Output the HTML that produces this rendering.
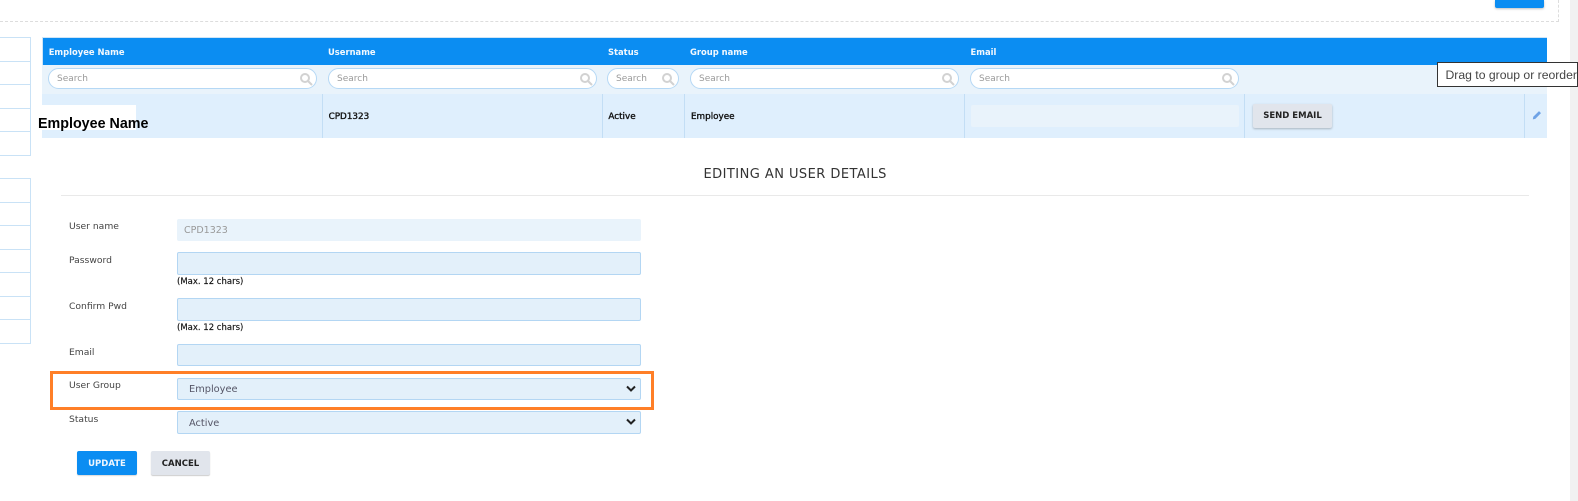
<!DOCTYPE html>
<html><head><meta charset="utf-8"><style>
html,body{margin:0;padding:0;width:1578px;height:501px;overflow:hidden;background:#fff;font-family:"DejaVu Sans","Liberation Sans",sans-serif;}
div,span{position:absolute;box-sizing:border-box;white-space:nowrap;}
.t{line-height:14px;height:14px;}
.h{color:#f2f8fe;font-size:8.4px;font-weight:bold;top:45px;}
.s{top:68px;height:21px;background:#fff;border:1px solid #b5d8f5;border-radius:11px;}
.s span{left:8px;top:3px;font-size:9px;line-height:14px;color:#9a9a9a;}
.s svg{position:absolute;right:3px;top:3px;}
.sep{top:94px;height:44px;width:1px;background:#c3def5;}
.c{top:110px;font-size:8.8px;color:#111;line-height:14px;-webkit-text-stroke:.35px #111;}
.st{left:0;width:31px;height:1px;background:#c9e2f6;}
.lb{left:69px;font-size:9.2px;color:#444;line-height:14px;}
.in{left:177px;width:464px;background:#e3f0fa;border:1px solid #b3d6f3;border-radius:2px;}
.hint{left:177px;font-size:8.5px;color:#111;line-height:12px;-webkit-text-stroke:.15px #111;}
.sel{font-size:9.8px;color:#556;padding-left:11px;}
.sel svg{position:absolute;right:3px;top:6px;}
</style></head><body>
<div style="left:0;top:21px;width:1559px;border-top:1px dashed #ddd;"></div>
<div style="left:1558px;top:0;height:22px;border-left:1px dashed #ddd;"></div>
<div style="left:1495px;top:0;width:49px;height:8px;background:#0b8df2;border-radius:0 0 2px 2px;box-shadow:0 1px 2px rgba(0,0,0,.25);"></div>
<div style="left:1570px;top:0;width:8px;height:501px;background:#f1f1f1;"></div>

<div style="left:30px;top:37px;width:1px;height:119px;background:#c9e2f6;"></div>
<div class="st" style="top:37px"></div><div class="st" style="top:61px"></div><div class="st" style="top:84px"></div><div class="st" style="top:108px"></div><div class="st" style="top:131px"></div><div class="st" style="top:155px"></div>
<div style="left:30px;top:178px;width:1px;height:166px;background:#c9e2f6;"></div>
<div class="st" style="top:178px"></div><div class="st" style="top:202px"></div><div class="st" style="top:225px"></div><div class="st" style="top:249px"></div><div class="st" style="top:272px"></div><div class="st" style="top:296px"></div><div class="st" style="top:319px"></div><div class="st" style="top:343px"></div>

<div style="left:42px;top:37px;width:1505px;height:28px;background:#0b8df2;border-top:1px solid #cfe5f7;border-left:1px solid #cfe5f7;"></div>
<div style="left:42px;top:65px;width:1505px;height:29px;background:#e9f3fb;"></div>
<div style="left:42px;top:94px;width:1505px;height:44px;background:#dfeffd;"></div>

<span class="h t" style="left:48.7px">Employee Name</span>
<span class="h t" style="left:328px">Username</span>
<span class="h t" style="left:608px">Status</span>
<span class="h t" style="left:690px">Group name</span>
<span class="h t" style="left:970.5px">Email</span>

<div class="s" style="left:48px;width:269px"><span>Search</span><svg width="14" height="14" viewBox="0 0 14 14" fill="none" stroke="#d2d2d2" stroke-width="2"><circle cx="6" cy="6" r="4"/><path d="M9 9l4 4"/></svg></div>
<div class="s" style="left:328px;width:269px"><span>Search</span><svg width="14" height="14" viewBox="0 0 14 14" fill="none" stroke="#d2d2d2" stroke-width="2"><circle cx="6" cy="6" r="4"/><path d="M9 9l4 4"/></svg></div>
<div class="s" style="left:607px;width:72px"><span>Search</span><svg width="14" height="14" viewBox="0 0 14 14" fill="none" stroke="#d2d2d2" stroke-width="2"><circle cx="6" cy="6" r="4"/><path d="M9 9l4 4"/></svg></div>
<div class="s" style="left:690px;width:269px"><span>Search</span><svg width="14" height="14" viewBox="0 0 14 14" fill="none" stroke="#d2d2d2" stroke-width="2"><circle cx="6" cy="6" r="4"/><path d="M9 9l4 4"/></svg></div>
<div class="s" style="left:970px;width:269px"><span>Search</span><svg width="14" height="14" viewBox="0 0 14 14" fill="none" stroke="#d2d2d2" stroke-width="2"><circle cx="6" cy="6" r="4"/><path d="M9 9l4 4"/></svg></div>

<div class="sep" style="left:322px"></div><div class="sep" style="left:602px"></div><div class="sep" style="left:684px"></div><div class="sep" style="left:964px"></div><div class="sep" style="left:1244px"></div><div class="sep" style="left:1524px"></div>

<div style="left:42px;top:105px;width:94px;height:25px;background:#fff;"></div>
<span style="left:38px;top:116px;font:bold 14.3px/16px 'Liberation Sans',sans-serif;color:#000;">Employee Name</span>
<span class="c" style="left:328.6px">CPD1323</span>
<span class="c" style="left:608.4px">Active</span>
<span class="c" style="left:691px">Employee</span>
<div style="left:971px;top:105px;width:268px;height:22px;background:#e9f3fb;border-radius:2px;"></div>
<div style="left:1253px;top:104px;width:79px;height:24px;background:#e1e5ec;border-radius:2px;box-shadow:0 1px 2px rgba(0,0,0,.25);font-size:8.5px;font-weight:bold;color:#222;text-align:center;line-height:25px;">SEND EMAIL</div>
<svg style="position:absolute;left:1532px;top:110px" width="10" height="10" viewBox="0 0 10 10"><path d="M.8 9.4l.5-2.6L7 1.1 9 3.1 3.3 8.9z" fill="#6fa3e6"/></svg>

<div style="left:1437px;top:62px;width:141px;height:25px;background:#fff;border:1px solid #333;"></div>
<span style="left:1445.5px;top:67px;font:12.2px/16px 'Liberation Sans',sans-serif;color:#444;">Drag to group or reorder</span>

<span style="left:703.5px;top:167px;font-size:13px;letter-spacing:.45px;line-height:16px;color:#333;">EDITING AN USER DETAILS</span>
<div style="left:61px;top:195px;width:1468px;height:1px;background:#e9e9e9;"></div>

<span class="lb" style="top:220px">User name</span>
<div class="in" style="top:219px;height:22px;background:#e9f3fb;border:none;color:#999;font-size:9.5px;line-height:23px;padding-left:7px;">CPD1323</div>
<span class="lb" style="top:254px">Password</span>
<div class="in" style="top:252px;height:23px"></div>
<span class="hint" style="top:276px">(Max. 12 chars)</span>
<span class="lb" style="top:300px">Confirm Pwd</span>
<div class="in" style="top:298px;height:23px"></div>
<span class="hint" style="top:322px">(Max. 12 chars)</span>
<span class="lb" style="top:346px">Email</span>
<div class="in" style="top:344px;height:22px"></div>
<span class="lb" style="top:379px">User Group</span>
<div class="in sel" style="top:378px;height:22px;line-height:21px">Employee<svg width="12" height="8" viewBox="0 0 12 8" fill="none" stroke="#222" stroke-width="2"><path d="M2 1.5l4 4 4-4"/></svg></div>
<span class="lb" style="top:413px">Status</span>
<div class="in sel" style="top:411px;height:23px;line-height:23px">Active<svg width="12" height="8" viewBox="0 0 12 8" fill="none" stroke="#222" stroke-width="2"><path d="M2 1.5l4 4 4-4"/></svg></div>
<div style="left:50px;top:371px;width:604px;height:39px;border:3px solid #ff7f27;"></div>
<div style="left:77px;top:451px;width:60px;height:24px;background:#0b8df2;border-radius:2px;color:#eef6fe;font-size:8.5px;font-weight:bold;text-align:center;line-height:26px;box-shadow:0 1px 1px rgba(0,0,0,.15);">UPDATE</div>
<div style="left:151px;top:451px;width:59px;height:24px;background:#e1e5ec;border-radius:2px;color:#222;font-size:8.5px;font-weight:bold;text-align:center;line-height:26px;box-shadow:0 1px 1px rgba(0,0,0,.2);">CANCEL</div>
</body></html>
